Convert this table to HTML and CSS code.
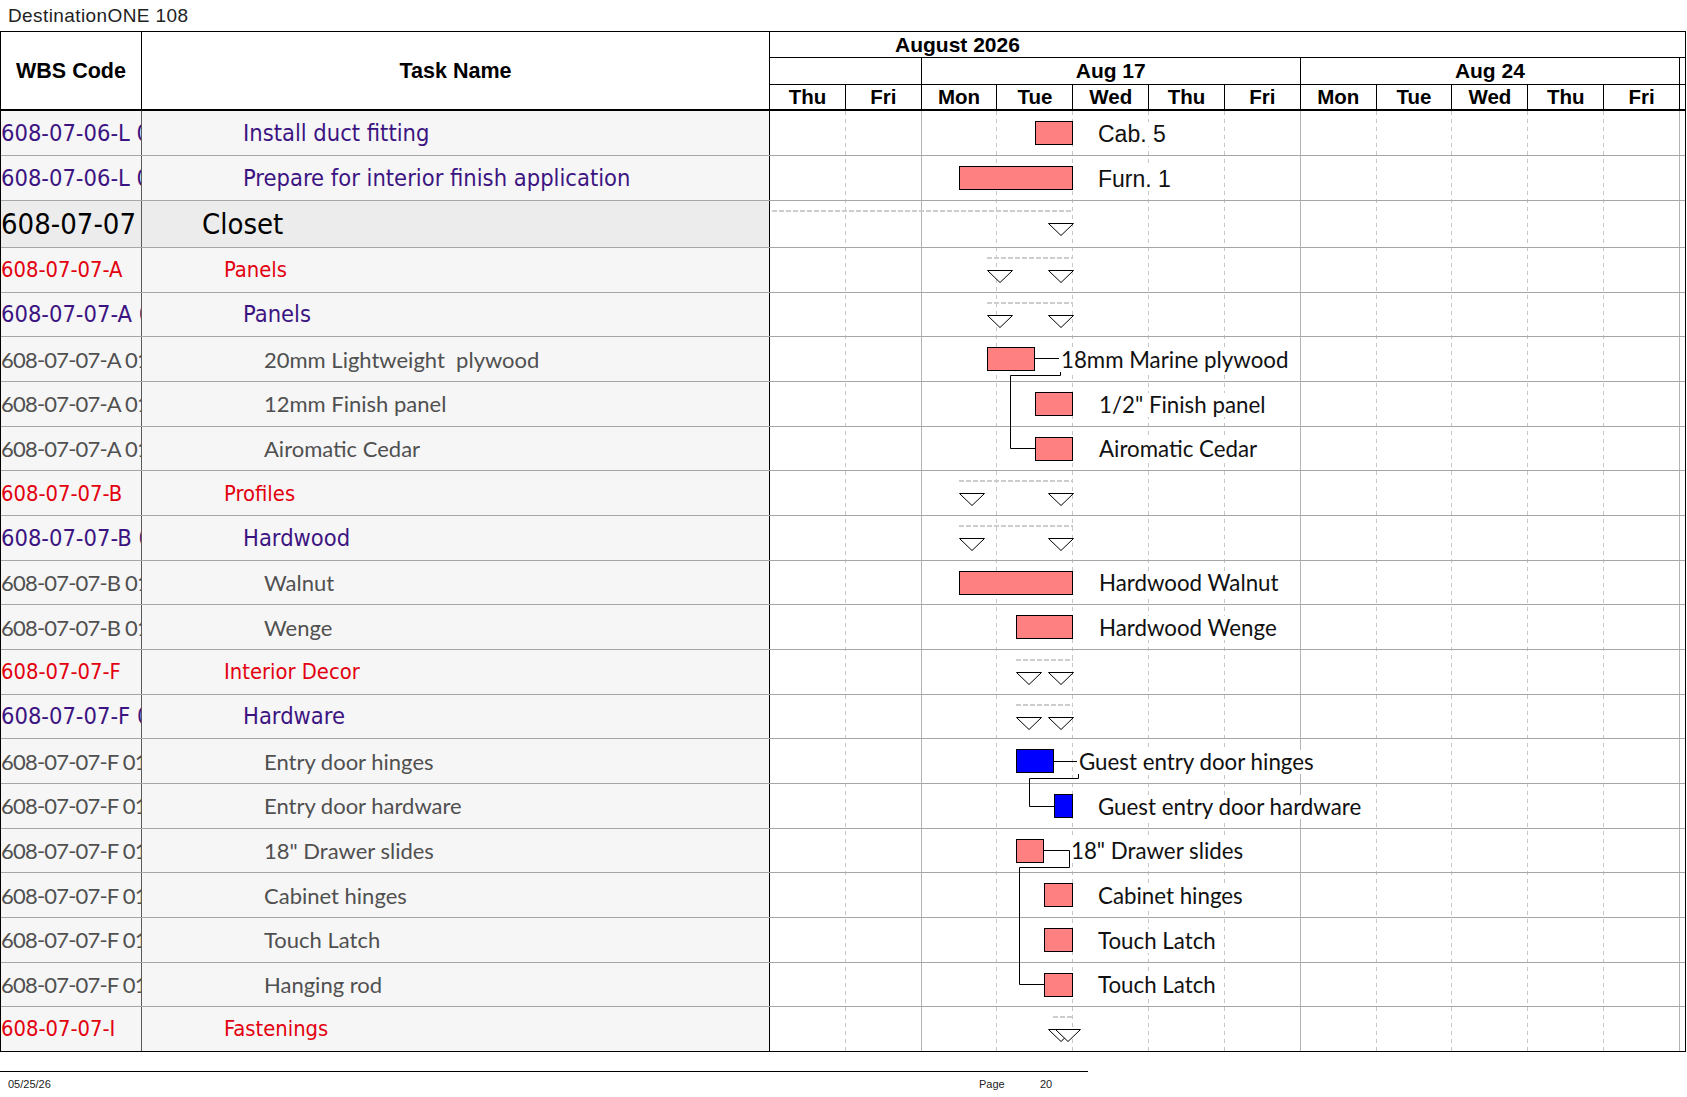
FILE: index.html
```html
<!DOCTYPE html>
<html>
<head>
<meta charset="utf-8">
<title>DestinationONE 108</title>
<link rel="stylesheet" href="styles.css">
</head>
<body>
<svg width="0" height="0" class="defs">
  <defs>
    <symbol id="tri" viewBox="0 0 26 13"><path d="M0.5 0.5 H25.5 L13 12.5 Z" fill="#fff" stroke="#000" stroke-width="1"/></symbol>
  </defs>
</svg>
<div class="title">DestinationONE 108</div>
<div class="sheet">
  <div class="head">
    <div class="hcell">WBS Code</div>
    <div class="hcell">Task Name</div>
    <div class="timescale">
      <div class="month">August 2026</div>
      <div class="weeks">
        <div class="wk"></div>
        <div class="wk">Aug 17</div>
        <div class="wk">Aug 24</div>
        <div class="tail"></div>
      </div>
      <div class="days">
        <div class="day">Thu</div><div class="day">Fri</div><div class="day">Mon</div><div class="day">Tue</div><div class="day">Wed</div><div class="day">Thu</div><div class="day">Fri</div><div class="day">Mon</div><div class="day">Tue</div><div class="day">Wed</div><div class="day">Thu</div><div class="day">Fri</div><div class="tail"></div>
      </div>
    </div>
  </div>
  <div class="body">
    <div class="gridlayer">
      <div></div><div class="wkend"></div><div></div><div></div><div></div><div></div><div class="wkend"></div><div></div><div></div><div></div><div></div><div class="wkend"></div>
    </div>
    <svg class="links" width="915" height="945" viewBox="0 0 915 945">
      <path d="M265 247.5 H290.5 V264.5 H240.5 V337.5 H265" fill="none" stroke="#000" stroke-width="1"/>
      <path d="M284 650.5 H308.5 V667.5 H259.5 V695.5 H284" fill="none" stroke="#000" stroke-width="1"/>
      <path d="M274 739.5 H299.5 V756.5 H249.5 V873.5 H274" fill="none" stroke="#000" stroke-width="1"/>
    </svg>

    <div class="row r1 lv-p">
      <div class="wbs">608-07-06-L 01</div>
      <div class="task">Install duct fitting</div>
      <div class="gc">
        <div class="bar" style="left:265px;width:38px"></div>
        <div class="lbl arial" style="left:328px">Cab. 5</div>
      </div>
    </div>
    <div class="row r2 lv-p">
      <div class="wbs">608-07-06-L 02</div>
      <div class="task">Prepare for interior finish application</div>
      <div class="gc">
        <div class="bar" style="left:189px;width:114px"></div>
        <div class="lbl arial" style="left:328px">Furn. 1</div>
      </div>
    </div>
    <div class="row r3 lv-c">
      <div class="wbs">608-07-07</div>
      <div class="task">Closet</div>
      <div class="gc">
        <div class="sum" style="left:2px;width:300px"></div>
        <svg class="tri" style="left:278px"><use href="#tri"/></svg>
      </div>
    </div>
    <div class="row lv-r">
      <div class="wbs">608-07-07-A</div>
      <div class="task">Panels</div>
      <div class="gc">
        <div class="sum" style="left:217px;width:86px"></div>
        <svg class="tri" style="left:217px"><use href="#tri"/></svg>
        <svg class="tri" style="left:278px"><use href="#tri"/></svg>
      </div>
    </div>
    <div class="row lv-p">
      <div class="wbs">608-07-07-A 01</div>
      <div class="task">Panels</div>
      <div class="gc">
        <div class="sum" style="left:217px;width:86px"></div>
        <svg class="tri" style="left:217px"><use href="#tri"/></svg>
        <svg class="tri" style="left:278px"><use href="#tri"/></svg>
      </div>
    </div>
    <div class="row lv-g">
      <div class="wbs">608-07-07-A 01 01</div>
      <div class="task">20mm Lightweight  plywood</div>
      <div class="gc">
        <div class="bar" style="left:217px;width:48px"></div>
        <div class="lbl pad" style="left:289px">18mm Marine plywood</div>
      </div>
    </div>
    <div class="row lv-g">
      <div class="wbs">608-07-07-A 01 02</div>
      <div class="task">12mm Finish panel</div>
      <div class="gc">
        <div class="bar" style="left:265px;width:38px"></div>
        <div class="lbl" style="left:329px">1/2" Finish panel</div>
      </div>
    </div>
    <div class="row lv-g">
      <div class="wbs">608-07-07-A 01 03</div>
      <div class="task">Airomatic Cedar</div>
      <div class="gc">
        <div class="bar" style="left:265px;width:38px"></div>
        <div class="lbl" style="left:329px">Airomatic Cedar</div>
      </div>
    </div>
    <div class="row lv-r">
      <div class="wbs">608-07-07-B</div>
      <div class="task">Profiles</div>
      <div class="gc">
        <div class="sum" style="left:189px;width:114px"></div>
        <svg class="tri" style="left:189px"><use href="#tri"/></svg>
        <svg class="tri" style="left:278px"><use href="#tri"/></svg>
      </div>
    </div>
    <div class="row lv-p">
      <div class="wbs">608-07-07-B 01</div>
      <div class="task">Hardwood</div>
      <div class="gc">
        <div class="sum" style="left:189px;width:114px"></div>
        <svg class="tri" style="left:189px"><use href="#tri"/></svg>
        <svg class="tri" style="left:278px"><use href="#tri"/></svg>
      </div>
    </div>
    <div class="row lv-g">
      <div class="wbs">608-07-07-B 01 01</div>
      <div class="task">Walnut</div>
      <div class="gc">
        <div class="bar" style="left:189px;width:114px"></div>
        <div class="lbl" style="left:329px">Hardwood Walnut</div>
      </div>
    </div>
    <div class="row lv-g">
      <div class="wbs">608-07-07-B 01 02</div>
      <div class="task">Wenge</div>
      <div class="gc">
        <div class="bar" style="left:246px;width:57px"></div>
        <div class="lbl" style="left:329px">Hardwood Wenge</div>
      </div>
    </div>
    <div class="row lv-r">
      <div class="wbs">608-07-07-F</div>
      <div class="task">Interior Decor</div>
      <div class="gc">
        <div class="sum" style="left:246px;width:57px"></div>
        <svg class="tri" style="left:246px"><use href="#tri"/></svg>
        <svg class="tri" style="left:278px"><use href="#tri"/></svg>
      </div>
    </div>
    <div class="row lv-p">
      <div class="wbs">608-07-07-F 01</div>
      <div class="task">Hardware</div>
      <div class="gc">
        <div class="sum" style="left:246px;width:57px"></div>
        <svg class="tri" style="left:246px"><use href="#tri"/></svg>
        <svg class="tri" style="left:278px"><use href="#tri"/></svg>
      </div>
    </div>
    <div class="row lv-g">
      <div class="wbs">608-07-07-F 01 01</div>
      <div class="task">Entry door hinges</div>
      <div class="gc">
        <div class="bar blue" style="left:246px;width:38px"></div>
        <div class="lbl pad" style="left:307px">Guest entry door hinges</div>
      </div>
    </div>
    <div class="row lv-g">
      <div class="wbs">608-07-07-F 01 02</div>
      <div class="task">Entry door hardware</div>
      <div class="gc">
        <div class="bar blue" style="left:284px;width:19px"></div>
        <div class="lbl" style="left:328px">Guest entry door hardware</div>
      </div>
    </div>
    <div class="row lv-g">
      <div class="wbs">608-07-07-F 01 03</div>
      <div class="task">18" Drawer slides</div>
      <div class="gc">
        <div class="bar" style="left:246px;width:28px"></div>
        <div class="lbl" style="left:301px">18" Drawer slides</div>
      </div>
    </div>
    <div class="row lv-g">
      <div class="wbs">608-07-07-F 01 04</div>
      <div class="task">Cabinet hinges</div>
      <div class="gc">
        <div class="bar" style="left:274px;width:29px"></div>
        <div class="lbl" style="left:328px">Cabinet hinges</div>
      </div>
    </div>
    <div class="row lv-g">
      <div class="wbs">608-07-07-F 01 05</div>
      <div class="task">Touch Latch</div>
      <div class="gc">
        <div class="bar" style="left:274px;width:29px"></div>
        <div class="lbl" style="left:328px">Touch Latch</div>
      </div>
    </div>
    <div class="row lv-g">
      <div class="wbs">608-07-07-F 01 06</div>
      <div class="task">Hanging rod</div>
      <div class="gc">
        <div class="bar" style="left:274px;width:29px"></div>
        <div class="lbl" style="left:328px">Touch Latch</div>
      </div>
    </div>
    <div class="row last lv-r">
      <div class="wbs">608-07-07-I</div>
      <div class="task">Fastenings</div>
      <div class="gc">
        <div class="sum" style="left:283px;width:20px"></div>
        <svg class="tri" style="left:278px"><use href="#tri"/></svg>
        <svg class="tri" style="left:285px"><use href="#tri"/></svg>
      </div>
    </div>
  </div>
</div>
<div class="footer">
  <span class="date">05/25/26</span>
  <span class="page">Page</span>
  <span class="pnum">20</span>
</div>
</body>
</html>
```

FILE: styles.css
```css
* { box-sizing: border-box; }

body {
  margin: 0;
  width: 1687px;
  background: #fff;
  font-family: "Liberation Sans", Arial, sans-serif;
  color: #000;
}

.defs { position: absolute; width: 0; height: 0; }

.title {
  height: 31px;
  padding: 5px 0 0 8px;
  font-size: 19px;
  line-height: 22px;
  color: #222;
  letter-spacing: 0.4px;
}

.sheet {
  --c: 75.833px;
  width: 1686px;
  border: 1px solid #000;
}

/* ---------- header ---------- */
.head {
  display: grid;
  grid-template-columns: 141px 628px 915px;
  height: 79px;
  border-bottom: 2px solid #000;
}

.hcell {
  display: flex;
  align-items: center;
  justify-content: center;
  padding-top: 2px;
  border-right: 1px solid #000;
  font-weight: bold;
  font-size: 21.5px;
}

.timescale {
  display: grid;
  grid-template-rows: 26px 27px 1fr;
  font-weight: bold;
}

.month {
  border-bottom: 1px solid #000;
  font-size: 21px;
  line-height: 25px;
  padding-left: 125px;
}

.weeks {
  display: grid;
  grid-template-columns: calc(var(--c) * 2) calc(var(--c) * 5) calc(var(--c) * 5) 1fr;
  border-bottom: 1px solid #000;
}

.wk {
  border-right: 1px solid #000;
  font-size: 21px;
  line-height: 26px;
  text-align: center;
}

.days {
  display: grid;
  grid-template-columns: repeat(12, var(--c)) 1fr;
}

.day {
  border-right: 1px solid #000;
  font-size: 20.5px;
  line-height: 24px;
  text-align: center;
}

/* ---------- body ---------- */
.body {
  position: relative;
}

.gridlayer {
  position: absolute;
  left: 769px;
  top: 0;
  bottom: 0;
  width: calc(var(--c) * 12);
  display: grid;
  grid-template-columns: repeat(12, 1fr);
}

.gridlayer div {
  background: linear-gradient(#c6c6c6 50%, transparent 50%) right top / 1px 8px repeat-y;
}

.gridlayer div.wkend {
  background: linear-gradient(#b4b4b4, #b4b4b4) right top / 1px 100% no-repeat;
}

.links {
  position: absolute;
  left: 769px;
  top: 0;
  z-index: 1;
}

.row {
  position: relative;
  display: grid;
  grid-template-columns: 141px 628px 915px;
  height: 44.67px;
  border-bottom: 1px solid #a6a6a6;
}

.row.r1, .row.r2 { height: 45px; }
.row.r3 { height: 47px; }
.row.last { height: 43.6px; border-bottom: none; }

.wbs {
  display: flex;
  align-items: center;
  overflow: hidden;
  white-space: nowrap;
  background: #f6f6f6;
  border-right: 1px solid #5a5a5a;
  padding-left: 0;
}

.task {
  display: flex;
  align-items: center;
  white-space: pre;
  overflow: hidden;
  background: #f6f6f6;
  border-right: 1px solid #000;
}

.gc {
  position: relative;
}

/* levels */
.lv-p .wbs, .lv-p .task {
  font-family: "DejaVu Sans Condensed", "DejaVu Sans", sans-serif;
  font-stretch: condensed;
  font-size: 23.5px;
  color: #3c1482;
}
.lv-p .task { padding-left: 101px; }

.lv-r .wbs, .lv-r .task {
  font-family: "DejaVu Sans Condensed", "DejaVu Sans", sans-serif;
  font-stretch: condensed;
  font-size: 21.8px;
  color: #e3000f;
}
.lv-r .task { padding-left: 82px; }

.lv-c .wbs, .lv-c .task {
  font-family: "DejaVu Sans Condensed", "DejaVu Sans", sans-serif;
  font-stretch: condensed;
  font-size: 29px;
  color: #000;
  background: #ececec;
}
.lv-c .task { padding-left: 60px; }

.lv-g .wbs, .lv-g .task {
  font-family: Lato, "Open Sans", sans-serif;
  font-size: 22px;
  color: #505050;
}
.lv-g .wbs { letter-spacing: -0.8px; }
.lv-g .task { padding-left: 122px; }

/* chart items */
.bar {
  position: absolute;
  top: 10px;
  height: 24px;
  border: 1px solid #000;
  background: #ff8080;
  z-index: 2;
}

.bar.blue { background: #0000ff; }

.lbl {
  position: absolute;
  top: calc(50% - 11px);
  height: 24px;
  line-height: 24px;
  font-family: Lato, "Open Sans", sans-serif;
  font-size: 22.3px;
  color: #111;
  white-space: nowrap;
  background: #fff;
  z-index: 2;
}

.lbl.pad { padding-left: 2px; }

.lbl.arial {
  font-family: "Liberation Sans", Arial, sans-serif;
  font-size: 23px;
}

.sum {
  position: absolute;
  top: 9px;
  height: 2px;
  background: linear-gradient(to right, #cdcdcd 70%, transparent 70%) left top / 7px 2px repeat-x;
  z-index: 2;
}

.tri {
  position: absolute;
  top: 22px;
  width: 26px;
  height: 13px;
  z-index: 2;
}

/* ---------- footer ---------- */
.footer {
  margin-top: 19px;
  width: 1088px;
  border-top: 1px solid #000;
  display: flex;
  padding-top: 6px;
  font-size: 11px;
  line-height: 13px;
  color: #222;
}

.date { width: 979px; padding-left: 8px; }
.page { width: 61px; }
```
